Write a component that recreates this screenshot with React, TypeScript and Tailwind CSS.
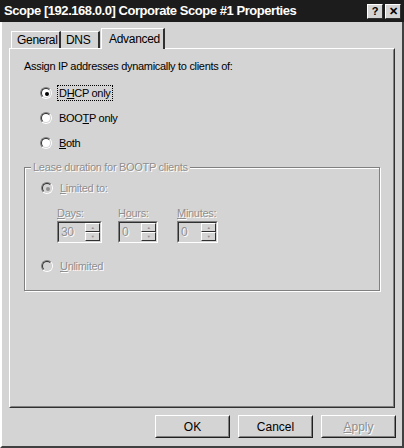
import React from "react";

const font = "font-['Liberation_Sans',Arial,sans-serif]";
const dis = "text-[#8f8f8f] [text-shadow:1px_1px_0_#fff]";

function Radio({ checked, disabled }: { checked?: boolean; disabled?: boolean }) {
  return (
    <span className="relative inline-block shrink-0 w-[12px] h-[12px] rounded-full border border-t-[#808080] border-l-[#808080] border-r-white border-b-white">
      <span
        className={`absolute inset-0 rounded-full border border-t-[#303030] border-l-[#303030] border-r-[#d4d4d4] border-b-[#d4d4d4] ${
          disabled ? "bg-[#d4d4d4]" : "bg-white"
        }`}
      />
      {checked && (
        <span
          className={`absolute left-[4px] top-[4px] w-[4px] h-[4px] rounded-full ${
            disabled ? "bg-[#8f8f8f]" : "bg-black"
          }`}
        />
      )}
    </span>
  );
}

function Spin({ value, w }: { value: string; w: string }) {
  return (
    <div className={`flex h-[22px] ${w} border border-t-[#808080] border-l-[#808080] border-r-white border-b-white`}>
      <div className="flex flex-1 border border-t-[#303030] border-l-[#303030] border-r-[#d4d4d4] border-b-[#d4d4d4] bg-[#d4d4d4]">
        <span className={`flex-1 pl-[2px] pt-[2px] text-[12px] leading-[14px] ${dis}`}>{value}</span>
        <div className="flex flex-col w-[15px]">
          {["▲", "▼"].map((a) => (
            <span
              key={a}
              className="flex-1 flex items-center justify-center border border-t-white border-l-white border-r-[#303030] border-b-[#303030] text-[4px] leading-none text-[#8f8f8f]"
            >
              {a}
            </span>
          ))}
        </div>
      </div>
    </div>
  );
}

function Btn({ children, disabled }: { children: React.ReactNode; disabled?: boolean }) {
  return (
    <div className="w-[75px] h-[23px] border border-t-white border-l-white border-r-[#202020] border-b-[#202020]">
      <div
        className={`w-full h-full flex items-center justify-center border border-transparent border-r-[#808080] border-b-[#808080] text-[12px] ${
          disabled ? dis : "text-black"
        }`}
      >
        {children}
      </div>
    </div>
  );
}

export default function App() {
  return (
    <div className={`w-[404px] h-[448px] bg-[#d4d4d4] flex flex-col border-l-2 border-l-white border-b-2 border-b-[#404040] border-r-2 border-r-[#404040] ${font}`}>
      {/* Title bar */}
      <div className="h-[22px] bg-[#1c1c1c] flex items-center pl-[4px] pr-[3px] -ml-[2px] -mr-[2px]">
        <span className="flex-1 text-white font-bold text-[13px] tracking-[-0.45px]">
          Scope [192.168.0.0] Corporate Scope #1 Properties
        </span>
        <div className="flex gap-[2px]">
          {["?", "✕"].map((g) => (
            <span
              key={g}
              className="w-[16px] h-[15px] bg-[#d4d4d4] border border-t-white border-l-white border-r-[#303030] border-b-[#303030] flex items-center justify-center text-[11px] font-bold text-black leading-none"
            >
              {g}
            </span>
          ))}
        </div>
      </div>

      {/* Tabs */}
      <div className="flex items-end pl-[9px] pt-[6px] h-[26px] text-[12px] tracking-[-0.3px]">
        <div className="h-[17px] w-[50px] pl-[5px] border-t border-l border-white border-r-2 border-r-[#303030] flex items-center">General</div>
        <div className="h-[17px] w-[39px] pl-[5px] border-t border-white border-r-2 border-r-[#303030] flex items-center">DNS</div>
        <div className="relative h-[21px] w-[64px] pl-[7px] ml-[1px] border-t border-l border-white border-r-2 border-r-[#303030] flex items-center -mb-[1px] bg-[#d4d4d4] z-10">
          Advanced
        </div>
      </div>

      {/* Panel */}
      <div className="ml-[7px] mr-[7px] h-[360px] border border-t-white border-l-white border-r-[#303030] border-b-[#303030]">
        <div className="h-full border border-transparent border-r-[#808080] border-b-[#808080] pl-[13px] pr-[13px] pt-[10px] text-[11px] leading-[13px] tracking-[-0.3px]">
          <div>Assign IP addresses dynamically to clients of:</div>
          <div className="flex flex-col gap-[9px] pl-[16px] mt-[12px]">
            <div className="flex items-center h-[16px] gap-[5px]">
              <Radio checked />
              <span className="border border-dotted border-black px-[1px] leading-[14px]">
                D<u>H</u>CP only
              </span>
            </div>
            <div className="flex items-center h-[16px] gap-[5px]">
              <Radio />
              <span className="px-[2px]">
                BOO<u>T</u>P only
              </span>
            </div>
            <div className="flex items-center h-[16px] gap-[5px]">
              <Radio />
              <span className="px-[2px]">
                <u>B</u>oth
              </span>
            </div>
          </div>

          {/* Group box */}
          <div className="relative mt-[16px] h-[124px] border border-[#808080] shadow-[inset_1px_1px_0_#fff,1px_1px_0_#fff]">
            <span className={`absolute -top-[7px] left-[6px] bg-[#d4d4d4] px-[2px] ${dis}`}>
              Lease duration for BOOTP clients
            </span>
            <div className="pl-[16px] pt-[13px]">
              <div className="flex items-center h-[14px] gap-[5px]">
                <Radio checked disabled />
                <span className={`px-[2px] ${dis}`}>
                  <u>L</u>imited to:
                </span>
              </div>
              <div className="flex pl-[16px] mt-[12px]">
                <div className="flex flex-col gap-[1px]">
                  <span className={dis}>
                    <u>D</u>ays:
                  </span>
                  <Spin value="30" w="w-[45px]" />
                </div>
                <div className="flex flex-col gap-[1px] ml-[16px]">
                  <span className={dis}>
                    H<u>o</u>urs:
                  </span>
                  <Spin value="0" w="w-[40px]" />
                </div>
                <div className="flex flex-col gap-[1px] ml-[19px]">
                  <span className={dis}>
                    <u>M</u>inutes:
                  </span>
                  <Spin value="0" w="w-[41px]" />
                </div>
              </div>
              <div className="flex items-center h-[14px] gap-[5px] mt-[16px]">
                <Radio disabled />
                <span className={`px-[2px] ${dis}`}>
                  <u>U</u>nlimited
                </span>
              </div>
            </div>
          </div>
        </div>
      </div>

      {/* Buttons */}
      <div className="flex justify-end gap-[8px] pr-[6px] mt-[7px]">
        <Btn>OK</Btn>
        <Btn>Cancel</Btn>
        <Btn disabled>
          <span>
            <u>A</u>pply
          </span>
        </Btn>
      </div>
    </div>
  );
}
